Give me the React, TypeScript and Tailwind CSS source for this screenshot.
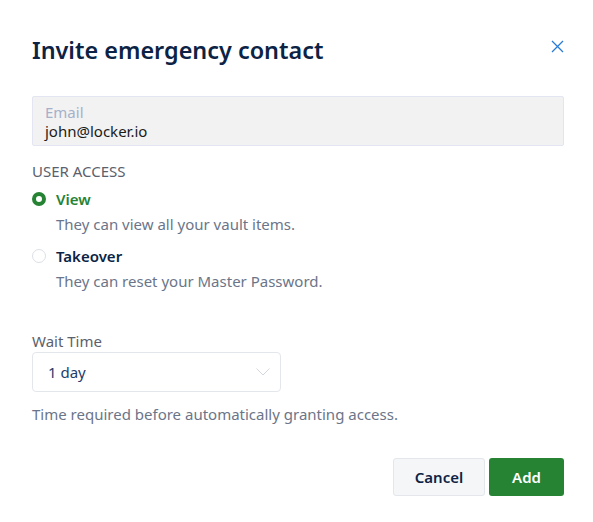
import { useState } from "react";

const options = [
  { value: "view", label: "View", desc: "They can view all your vault items." },
  { value: "takeover", label: "Takeover", desc: "They can reset your Master Password." },
];

const App = () => {
  const [access, setAccess] = useState("view");

  return (
    <div
      className="w-[593px] h-[522px] bg-white pl-8 pr-[29px] pt-[33px] text-[#0c2345]"
      style={{ fontFamily: '"Noto Sans", "Open Sans", sans-serif' }}
    >
      <div className="flex items-start justify-between">
        <h2 className="text-[23.4px] leading-[34px] font-semibold">Invite emergency contact</h2>
        <button className="mt-[7px] text-[#2a7bd4]">
          <svg width="13" height="13" viewBox="0 0 13 13" fill="none" stroke="currentColor" strokeWidth="1.3">
            <path d="M1 1L12 12M12 1L1 12" />
          </svg>
        </button>
      </div>

      <div className="mt-[29px] h-[50px] rounded-[2px] border border-[#e3e6f2] bg-[#f2f2f2] px-3 pt-[6px]">
        <div className="text-[15px] leading-[18px] text-[#a5b0c9]">Email</div>
        <div className="text-[15px] leading-[20px] text-[#1a1a1a]">john@locker.io</div>
      </div>

      <div className="mt-[15px] text-[15px] leading-[20px] text-[#5b616c]">USER ACCESS</div>

      <div className="mt-[8px] flex flex-col gap-[12px]">
        {options.map((o) => {
          const selected = access === o.value;
          return (
            <label key={o.value} className="cursor-pointer" onClick={() => setAccess(o.value)}>
              <div className="flex items-center gap-[10px]">
                {selected ? (
                  <span className="h-[14px] w-[14px] rounded-full border-[4.5px] border-[#268334] bg-white" />
                ) : (
                  <span className="h-[14px] w-[14px] rounded-full border border-[#dcdfe5] bg-white" />
                )}
                <span
                  className={
                    "text-[15px] leading-[20px] font-semibold " +
                    (selected ? "text-[#268334]" : "text-[#0c2345]")
                  }
                >
                  {o.label}
                </span>
              </div>
              <div className="mt-[5px] pl-6 text-[15px] leading-[20px] text-[#6b7589]">{o.desc}</div>
            </label>
          );
        })}
      </div>

      <div className="mt-[40px] text-[15px] leading-[20px] text-[#5b616c]">Wait Time</div>
      <div className="mt-[1px] flex h-[40px] w-[249px] items-center justify-between rounded-[4px] border border-[#e3e6eb] pl-[15px] pr-[10px]">
        <span className="text-[15px] text-[#1d3d6b]">1 day</span>
        <svg width="14" height="8" viewBox="0 0 14 8" fill="none" stroke="#d3d7de" strokeWidth="1">
          <path d="M0.5 0.5L7 7L13.5 0.5" />
        </svg>
      </div>
      <div className="mt-[12px] text-[15px] leading-[20px] text-[#6b7589]">
        Time required before automatically granting access.
      </div>

      <div className="mt-[34px] flex justify-end gap-1">
        <button className="h-[38px] w-[92px] rounded-[3px] border border-[#e3e6eb] bg-[#f4f6f8] text-[15px] font-semibold text-[#0c2345]">
          Cancel
        </button>
        <button className="h-[38px] w-[75px] rounded-[3px] bg-[#268334] text-[15px] font-semibold text-white">
          Add
        </button>
      </div>
    </div>
  );
};

export default App;
